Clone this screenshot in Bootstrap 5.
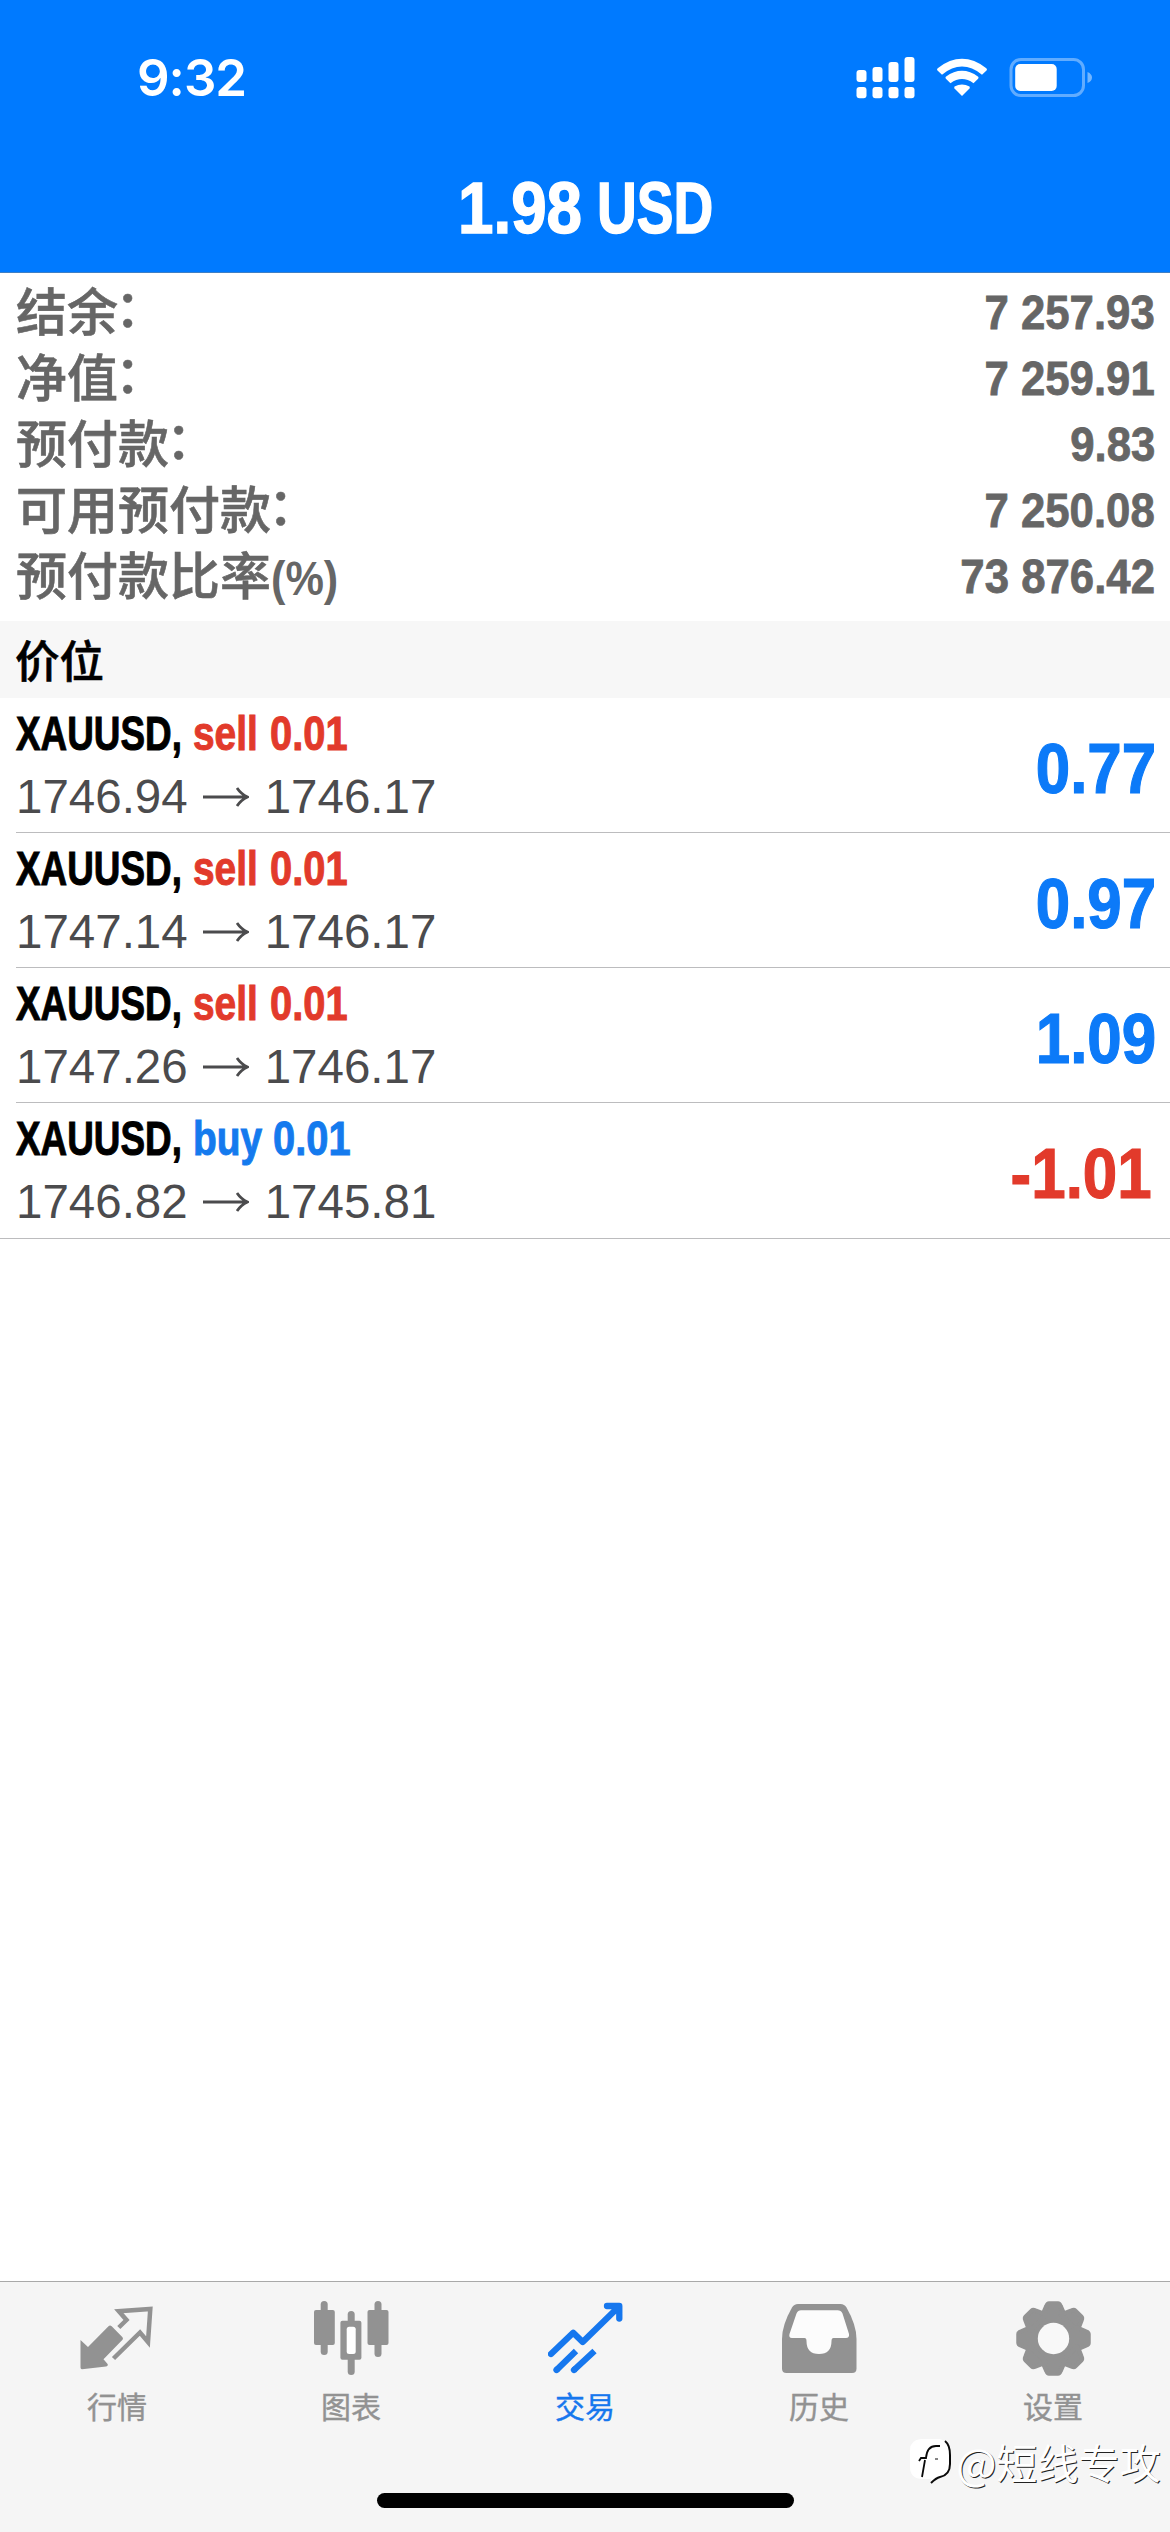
<!DOCTYPE html>
<html lang="zh-CN">
<head>
<meta charset="utf-8">
<meta name="viewport" content="width=device-width, initial-scale=1">
<title>交易</title>
<link href="https://cdn.jsdelivr.net/npm/bootstrap@5.3.0/dist/css/bootstrap.min.css" rel="stylesheet">
<style>
  :root { --app-blue: #007aff; --app-red: #e23a2b; }
  body { font-family: "Liberation Sans", "Noto Sans CJK SC", sans-serif; background: #fff; }
  .app { width: 1170px; height: 2532px; overflow: hidden; }
  .top-area { height: 273px; background: var(--app-blue); border-bottom: 1px solid #3f7fc4; }
  .status { height: 156px; padding: 0 78px 0 137px; }
  .clock { font: 600 51px/60px Inter, sans-serif; letter-spacing: -1px; }
  .status-icons { width: 236px; height: 44px; }
  .balance { height: 104px; gap: 22px; font-size: 72px; line-height: 104px; padding-right: 5px; -webkit-text-stroke: 1.5px; }
  .squeeze { display: block; white-space: nowrap; font-weight: 700; transform-origin: 0 50%; }
  .bal-num { width: 117px; transform: scaleX(.885); }
  .bal-cur { width: 111px; transform: scaleX(.765); }
  .summary { padding: 6px 15px 12px 16px; color: #666; }
  .summary-row { height: 66px; }
  .summary-label { font-size: 51px; line-height: 62px; padding-top: 4px; font-weight: 500; -webkit-text-stroke: .6px; }
  .colon { display: inline-block; transform: translate(-3px, -4px); }
  .pct { display: inline-block; font-size: 48px; font-weight: 700; transform: scaleX(.9); transform-origin: 0 50%; -webkit-text-stroke: 0; }
  .summary-value { font-size: 49px; line-height: 66px; transform: scaleX(.893); transform-origin: 100% 50%; -webkit-text-stroke: .8px; }
  .section-title { height: 77px; padding-left: 15px; background: #f7f7f7; font: 500 44.5px/75px "Noto Sans CJK SC", sans-serif; color: #000; -webkit-text-stroke: .6px; }
  .deal { height: 135px; margin-left: 16px; border-bottom: 1px solid #bcbcbe; }
  .deal:last-child { margin-left: 0; padding-left: 16px; height: 136px; }
  .deal-head { height: 67px; padding-top: 6px; font-size: 48px; line-height: 60px; -webkit-text-stroke: 1px; }
  .deal-sym { width: 177px; color: #000; transform: scaleX(.768); }
  .deal-side { width: 77px; transform: scaleX(.81); }
  .deal-vol { transform: scaleX(.83); }
  .deal-prices { font-size: 47.500px; line-height: 64px; color: #4b4b4d; }
  .deal-prices svg { width: 46px; height: 20px; margin: 0 16px 0 15px; }
  .profit { font-size: 70.500px; line-height: 134px; padding-top: 4px; height: 134px; transform: scaleX(.878); transform-origin: 100% 50%; margin-right: 14px; -webkit-text-stroke: 1.2px; }
  .c-blue { color: #147aee; }
  .profit.c-blue { color: #0c7af8; }
  .c-red { color: var(--app-red); }
  .tabs { height: 251px; background: #f5f5f5; border-top: 1px solid #a9a9a9; color: #929292; }
  .tab-item { padding-top: 19px; color: inherit; text-decoration: none; }
  .tab-item svg { width: 75px; height: 75px; }
  .tab-item span { font: 400 30px/40px "Noto Sans CJK SC", sans-serif; margin-top: 9px; -webkit-text-stroke: .4px; }
  .tab-item.current { color: #1677ee; }
  .home-bar { width: 417px; height: 15px; border-radius: 8px; background: #000; margin-bottom: 24px; }
  .watermark { right: 9px; bottom: 41px; gap: 4px; color: #fff; font: 400 41px/60px "Noto Sans CJK SC", sans-serif; text-shadow: 1px 1px 0 #222; }
  .watermark span { letter-spacing: .2px; }
  .watermark svg { width: 44px; height: 50px; }
  .at-sign { display: inline-block; transform: scale(1.04); }
</style>
</head>
<body>
<div class="app d-flex flex-column position-relative mx-auto">
  <header class="top-area text-white flex-shrink-0">
    <div class="status d-flex justify-content-between align-items-center">
      <span class="clock">9:32</span>
      <svg class="status-icons" viewBox="855.5 56 236 44" fill="#fff">
        <rect x="856" y="70" width="10" height="12" rx="3"/><rect x="872" y="67" width="10" height="15" rx="3"/><rect x="888" y="62" width="10" height="20" rx="3"/><rect x="904" y="57" width="10" height="25" rx="3"/>
        <rect x="856" y="87" width="10" height="11.300" rx="3"/><rect x="872" y="87" width="10" height="11.300" rx="3"/><rect x="888" y="87" width="10" height="11.300" rx="3"/><rect x="904" y="87" width="10" height="11.300" rx="3"/>
        <path d="M937.2 68.2Q961.5 49.5 985.8 68.2Q987 69.400 986 70.500L981.500 74.700Q961.500 58.500 941.500 74.700L937 70.500Q936 69.400 937.200 68.200Z"/>
        <path d="M945.300 76.700Q961.500 65 977.700 76.700Q978.500 77.800 977.600 78.800L973 83.200Q961.500 74.800 950 83.200L945.400 78.800Q944.500 77.800 945.300 76.700Z"/>
        <path d="M954 86.500Q961.500 82.500 969 86.500Q969.600 87.400 969 88.400L961.500 96L954 88.400Q953.400 87.400 954 86.500Z"/>
        <rect x="1010.500" y="59.500" width="72.500" height="36" rx="10" fill="none" stroke="#fff" stroke-opacity=".38" stroke-width="3"/>
        <rect x="1014.700" y="64" width="41.500" height="27" rx="5"/>
        <path d="M1087 72Q1091.500 74 1091.500 77.500T1087 83Z" opacity=".45"/>
      </svg>
    </div>
    <div class="balance d-flex justify-content-center"><span class="squeeze bal-num">1.98</span><span class="squeeze bal-cur">USD</span></div>
  </header>

  <section class="summary flex-shrink-0">
    <div class="summary-row d-flex justify-content-between"><span class="summary-label">结余<span class="colon">：</span></span><span class="summary-value fw-bold">7 257.93</span></div>
    <div class="summary-row d-flex justify-content-between"><span class="summary-label">净值<span class="colon">：</span></span><span class="summary-value fw-bold">7 259.91</span></div>
    <div class="summary-row d-flex justify-content-between"><span class="summary-label">预付款<span class="colon">：</span></span><span class="summary-value fw-bold">9.83</span></div>
    <div class="summary-row d-flex justify-content-between"><span class="summary-label">可用预付款<span class="colon">：</span></span><span class="summary-value fw-bold">7 250.08</span></div>
    <div class="summary-row d-flex justify-content-between"><span class="summary-label">预付款比率<span class="pct">(%)</span></span><span class="summary-value fw-bold">73 876.42</span></div>
  </section>

  <div class="section-title flex-shrink-0">价位</div>

  <main class="flex-grow-1">
    <div class="deal d-flex justify-content-between">
      <div>
        <div class="deal-head d-flex"><span class="squeeze deal-sym">XAUUSD,</span><span class="squeeze deal-side c-red">sell</span><span class="squeeze deal-vol c-red">0.01</span></div>
        <div class="deal-prices d-flex align-items-center"><span>1746.94</span><svg viewBox="0 0 46 20" fill="none" stroke="currentColor" stroke-width="2.800"><path d="M0 10H44M34 1Q38 7 44.500 10Q38 13 34 19"/></svg><span>1746.17</span></div>
      </div>
      <div class="profit fw-bold c-blue">0.77</div>
    </div>
    <div class="deal d-flex justify-content-between">
      <div>
        <div class="deal-head d-flex"><span class="squeeze deal-sym">XAUUSD,</span><span class="squeeze deal-side c-red">sell</span><span class="squeeze deal-vol c-red">0.01</span></div>
        <div class="deal-prices d-flex align-items-center"><span>1747.14</span><svg viewBox="0 0 46 20" fill="none" stroke="currentColor" stroke-width="2.800"><path d="M0 10H44M34 1Q38 7 44.500 10Q38 13 34 19"/></svg><span>1746.17</span></div>
      </div>
      <div class="profit fw-bold c-blue">0.97</div>
    </div>
    <div class="deal d-flex justify-content-between">
      <div>
        <div class="deal-head d-flex"><span class="squeeze deal-sym">XAUUSD,</span><span class="squeeze deal-side c-red">sell</span><span class="squeeze deal-vol c-red">0.01</span></div>
        <div class="deal-prices d-flex align-items-center"><span>1747.26</span><svg viewBox="0 0 46 20" fill="none" stroke="currentColor" stroke-width="2.800"><path d="M0 10H44M34 1Q38 7 44.500 10Q38 13 34 19"/></svg><span>1746.17</span></div>
      </div>
      <div class="profit fw-bold c-blue">1.09</div>
    </div>
    <div class="deal d-flex justify-content-between">
      <div>
        <div class="deal-head d-flex"><span class="squeeze deal-sym">XAUUSD,</span><span class="squeeze deal-side c-blue" style="width:80px">buy</span><span class="squeeze deal-vol c-blue">0.01</span></div>
        <div class="deal-prices d-flex align-items-center"><span>1746.82</span><svg viewBox="0 0 46 20" fill="none" stroke="currentColor" stroke-width="2.800"><path d="M0 10H44M34 1Q38 7 44.500 10Q38 13 34 19"/></svg><span>1745.81</span></div>
      </div>
      <div class="profit fw-bold c-red" style="margin-right:18px">-1.01</div>
    </div>
  </main>

  <footer class="tabs d-flex flex-column flex-shrink-0">
    <nav class="d-flex flex-grow-1">
      <a class="tab-item d-flex flex-column align-items-center flex-fill w-100" href="#">
        <svg viewBox="0 0 75 75"><path fill="currentColor" d="M.5 39L8 46L28.500 25.300Q30 23.500 31.700 25.300L42.500 36.200Q43.500 37.700 42.500 38.800L23.500 58.300L27.800 63.200Q28 65.300 26 65.600L2 68.300Q.5 68.300 .5 66.500Z"/><path fill="none" stroke="currentColor" stroke-width="4.500" d="M38.800 26.500L46.500 19L38.800 10.200L70.300 8L68 41L60 31.500L33.500 57.500"/></svg>
        <span>行情</span></a>
      <a class="tab-item d-flex flex-column align-items-center flex-fill w-100" href="#">
        <svg viewBox="0 0 75 75" fill="currentColor"><rect x="0" y="9" width="20.800" height="35" rx="2"/><rect x="6.700" y="0" width="7" height="54" rx="3.500"/><rect x="33.700" y="10" width="7" height="64" rx="3.500"/><rect x="26.400" y="19.700" width="21" height="39" rx="2"/><rect x="32.700" y="25.700" width="9" height="27.300" rx="2.500" fill="#fff"/><rect x="53.500" y="9" width="21" height="35" rx="2"/><rect x="60.500" y="0" width="7" height="56" rx="3.500"/></svg>
        <span>图表</span></a>
      <a class="tab-item current d-flex flex-column align-items-center flex-fill w-100" href="#">
        <svg viewBox="0 0 75 75" fill="none" stroke="currentColor" stroke-width="6.300" stroke-linecap="round" stroke-linejoin="round"><path d="M3 53L25.200 31.700L34.700 41L70 6.500M59 5H71.300V17.500"/><path stroke-linecap="butt" d="M8.500 69L28 50M26 69L46.500 50"/><path d="M8.500 69L9 68.500M26 69L26.500 68.500"/></svg>
        <span>交易</span></a>
      <a class="tab-item d-flex flex-column align-items-center flex-fill w-100" href="#">
        <svg viewBox="0 0 75 75"><path fill="currentColor" d="M16 3H58.500Q62.500 3 64.500 6.500Q74.500 24 74.500 38V67.500Q74.500 72 70 72H4.500Q0 72 0 67.500V38Q0 24 10 6.500Q12 3 16 3Z"/><path fill="#fcfcfc" d="M19 9.300H55.500Q59 9.300 60.500 12.500L67 33Q67.500 37 64 37H51.500Q49.500 37 49.500 40Q49.500 53 37 53T24.500 40Q24.500 37 22.500 37H10Q6.500 37 7.500 33L14.500 12.500Q16 9.300 19 9.300Z"/></svg>
        <span>历史</span></a>
      <a class="tab-item d-flex flex-column align-items-center flex-fill w-100" href="#">
        <svg viewBox="-37.500 -37.500 75 75"><defs><path id="tooth" d="M-4.500 -35H4.500Q6 -35 7 -32.500L10 -25.500L11 -22H-11L-10 -25.500L-7 -32.500Q-6 -35 -4.500 -35Z" stroke="currentColor" stroke-width="4.500" stroke-linejoin="round"/></defs><g fill="currentColor"><circle r="28"/><use href="#tooth"/><use href="#tooth" transform="rotate(45)"/><use href="#tooth" transform="rotate(90)"/><use href="#tooth" transform="rotate(135)"/><use href="#tooth" transform="rotate(180)"/><use href="#tooth" transform="rotate(225)"/><use href="#tooth" transform="rotate(270)"/><use href="#tooth" transform="rotate(315)"/></g><circle r="15.700" fill="#f8f8f8"/></svg>
        <span>设置</span></a>
    </nav>
    <div class="home-bar mx-auto flex-shrink-0"></div>
  </footer>

  <div class="watermark position-absolute d-flex align-items-center">
    <svg viewBox="0 0 44 50"><path fill="#fff" d="M12 3H31Q41 5 41 17V28Q41 40 30 41L23 47L22 43H12Q1 42 1 31V14Q1 4 12 3Z"/><g fill="none" stroke="#0a0a0a"><path stroke-width="2" d="M36 5Q41 9 41 19V28Q41 39 31 41Q27 42 22 47"/><path stroke-width="1.800" d="M10 25L12 22H17Q18 10 27 10H31M16 24L13 41"/><path stroke-width="1" d="M26 23H29"/></g></svg>
    <span><span class="at-sign">@</span>短线专攻</span>
  </div>
</div>
<script src="https://cdn.jsdelivr.net/npm/bootstrap@5.3.0/dist/js/bootstrap.bundle.min.js"></script>
</body>
</html>
